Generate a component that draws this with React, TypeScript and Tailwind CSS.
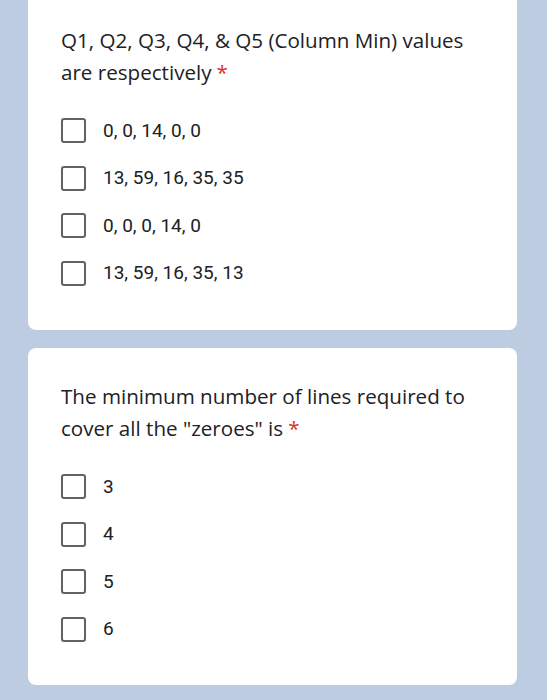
import React from 'react';

const titleFont = { fontFamily: '"Open Sans", Roboto, Arial, sans-serif' };
const optionFont = { fontFamily: 'Roboto, Arial, sans-serif' };

function Option({ label }: { label: string }) {
  return (
    <div className="flex h-[47.5px] items-center">
      <span className="h-[25px] w-[25px] shrink-0 rounded-[3px] border-[2.5px] border-[#5f6368]" />
      <span className="ml-[17px] text-[19px] text-[#202124]" style={optionFont}>
        {label}
      </span>
    </div>
  );
}

function Card({
  lines,
  options,
  className,
}: {
  lines: string[];
  options: string[];
  className: string;
}) {
  return (
    <div className={`bg-white px-[33px] ${className}`}>
      <div className="text-[20.6px] leading-[32px] text-[#202124]" style={titleFont}>
        {lines.map((l, i) => (
          <div key={i}>
            {l}
            {i === lines.length - 1 && <span className="ml-[5px] text-[#d93025]">*</span>}
          </div>
        ))}
      </div>
      <div className="mt-[19px] flex flex-col">
        {options.map((o) => (
          <Option key={o} label={o} />
        ))}
      </div>
    </div>
  );
}

export default function App() {
  return (
    <div className="h-[700px] w-full overflow-hidden bg-[#bdcce0] pl-[28px] pr-[30px]">
      <Card
        className="rounded-b-lg pt-[24px] pb-[33px]"
        lines={['Q1, Q2, Q3, Q4, & Q5 (Column Min) values', 'are respectively']}
        options={['0, 0, 14, 0, 0', '13, 59, 16, 35, 35', '0, 0, 0, 14, 0', '13, 59, 16, 35, 13']}
      />
      <Card
        className="mt-[18px] rounded-lg pt-[32px] pb-[32px]"
        lines={['The minimum number of lines required to', 'cover all the "zeroes" is']}
        options={['3', '4', '5', '6']}
      />
    </div>
  );
}
